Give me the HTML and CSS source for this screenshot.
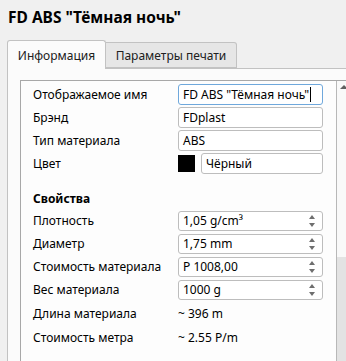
FILE: index.html
```html
<!DOCTYPE html>
<html lang="ru">
<head>
    <meta charset="utf-8">
    <link rel="stylesheet" href="styles.css">
</head>
<body>
    <h1 class="title">FD ABS "Тёмная ночь"</h1>

    <div class="tabs">
        <div class="tab active">Информация</div>
        <div class="tab">Параметры печати</div>
    </div>

    <div class="pane">
        <div class="scroll-area">
            <div class="form">
                <div class="row">
                    <span class="label">Отображаемое имя</span>
                    <div class="field focused">FD ABS "Тёмная ночь"<span class="caret"></span></div>
                </div>
                <div class="row">
                    <span class="label">Брэнд</span>
                    <div class="field">FDplast</div>
                </div>
                <div class="row">
                    <span class="label">Тип материала</span>
                    <div class="field">ABS</div>
                </div>
                <div class="row">
                    <span class="label">Цвет</span>
                    <div class="color-pick">
                        <span class="swatch"></span>
                        <div class="field">Чёрный</div>
                    </div>
                </div>

                <div class="group-title">Свойства</div>

                <div class="row">
                    <span class="label">Плотность</span>
                    <div class="field spin">1,05 g/cm³<span class="arrows"></span></div>
                </div>
                <div class="row">
                    <span class="label">Диаметр</span>
                    <div class="field spin">1,75 mm<span class="arrows"></span></div>
                </div>
                <div class="row">
                    <span class="label">Стоимость материала</span>
                    <div class="field spin">P 1008,00<span class="arrows"></span></div>
                </div>
                <div class="row">
                    <span class="label">Вес материала</span>
                    <div class="field spin">1000 g<span class="arrows"></span></div>
                </div>
                <div class="row plain">
                    <span class="label">Длина материала</span>
                    <span class="value">~ 396 m</span>
                </div>
                <div class="row plain">
                    <span class="label">Стоимость метра</span>
                    <span class="value">~ 2.55 P/m</span>
                </div>
            </div>

            <div class="scrollbar">
                <span class="arrow-up"></span>
                <span class="handle"></span>
            </div>
        </div>
    </div>
</body>
</html>
```

FILE: styles.css
```css
* {
    box-sizing: border-box;
}

html, body {
    height: 100%;
}

body {
    margin: 0;
    background: #f0f0f0;
    font-family: "Noto Sans", "Open Sans", sans-serif;
    font-size: 12px;
    color: #000;
    overflow: hidden;
}

.title {
    margin: 0;
    padding: 5px 8px 0;
    height: 40px;
    font-size: 15.5px;
    font-weight: bold;
    line-height: 24px;
}

/* вкладки */
.tabs {
    display: flex;
    align-items: flex-end;
    margin-left: 7px;
    height: 28px;
}

.tab {
    height: 26px;
    width: 131px;
    padding-top: 4px;
    text-align: center;
    background: #e6e6e6;
    border: 1px solid #c2c2c2;
    border-left: none;
    border-radius: 0 3px 0 0;
    color: #202020;
}

.tab.active {
    width: 99px;
    height: 29px;
    margin-bottom: -1px;
    padding-top: 6px;
    background: #fbfbfb;
    border-left: 1px solid #c2c2c2;
    border-bottom: none;
    border-radius: 3px 3px 0 0;
    position: relative;
    z-index: 1;
}

.pane {
    margin-left: 7px;
    width: 360px;
    height: 300px;
    background: #fbfbfb;
    border: 1px solid #c2c2c2;
    padding: 11px 0 0 12px;
}

.scroll-area {
    display: flex;
    height: 320px;
    background: #fdfdfd;
    border: 1px solid #a8a8a8;
    border-right: none;
}

.form {
    width: 315px;
    padding: 2px 0 0 12px;
}

.row {
    display: flex;
    align-items: center;
    height: 23px;
}

.label {
    width: 145px;
    flex-shrink: 0;
}

.field {
    position: relative;
    width: 145px;
    height: 21px;
    padding: 0 4px;
    line-height: 19px;
    background: #fff;
    border: 1px solid #bdbdbd;
    border-radius: 3px;
    white-space: nowrap;
}

.field.focused {
    border-color: #6fa8dc;
}

.caret {
    display: inline-block;
    width: 1px;
    height: 15px;
    margin-left: 1px;
    vertical-align: -3px;
    background: #000;
}

.color-pick {
    display: flex;
    align-items: center;
    gap: 6px;
}

.swatch {
    width: 17px;
    height: 17px;
    background: #000;
}

.color-pick .field {
    width: 122px;
}

.group-title {
    height: 34px;
    padding-top: 15px;
    line-height: 18px;
    font-weight: bold;
}

.field.spin {
    height: 20px;
    line-height: 18px;
}

.arrows {
    position: absolute;
    right: 6px;
    top: 3px;
    width: 7px;
    height: 12px;
}

.arrows::before,
.arrows::after {
    content: '';
    position: absolute;
    left: 0;
    border-left: 3.5px solid transparent;
    border-right: 3.5px solid transparent;
}

.arrows::before {
    top: 0;
    border-bottom: 4px solid #6e6e6e;
}

.arrows::after {
    bottom: 0;
    border-top: 4px solid #6e6e6e;
}

.row.plain {
    height: 24px;
}

.value {
    white-space: nowrap;
}

.scrollbar {
    position: relative;
    width: 20px;
    border-left: 1px solid #b8b8b8;
    background: #f9f9f9;
}

.arrow-up {
    position: absolute;
    top: 4px;
    left: 3px;
    border-left: 4px solid transparent;
    border-right: 4px solid transparent;
    border-bottom: 4px solid #606060;
}

.handle {
    position: absolute;
    top: 176px;
    left: 0;
    right: 0;
    bottom: 0;
    background: #e3e3e3;
}
```
